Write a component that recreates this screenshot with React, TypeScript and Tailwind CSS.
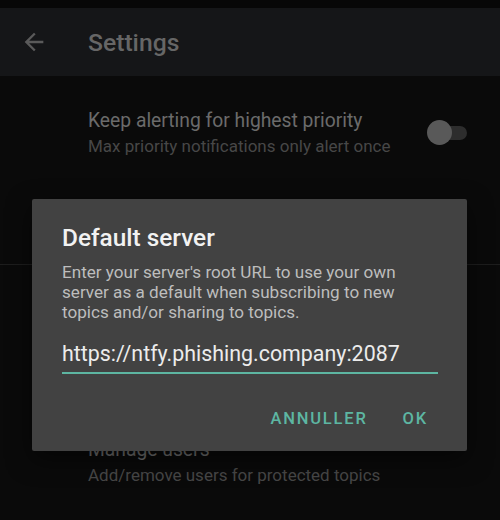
import React from 'react';

const BackArrow = () => (
  <svg width="28" height="28" viewBox="0 0 24 24" fill="#5a5a5a">
    <path d="M20 11H7.83l5.59-5.59L12 4l-8 8 8 8 1.41-1.41L7.83 13H20v-2z" />
  </svg>
);

const Toggle = () => (
  <div className="relative w-[40px] h-[26px] flex items-center">
    <div className="ml-[13px] w-[27px] h-[14px] rounded-full bg-[#2d2d2d]" />
    <div className="absolute left-0 top-[0.5px] w-[25px] h-[25px] rounded-full bg-[#595959]" />
  </div>
);

const App = () => {
  return (
    <div
      className="relative w-[500px] h-[520px] overflow-hidden bg-[#0a0a0a]"
      style={{ fontFamily: 'Roboto, "Noto Sans", sans-serif' }}
    >
      {/* Status strip */}
      <div className="h-[8px] bg-[#070707]" />

      {/* App bar */}
      <div className="h-[68px] bg-[#151618] flex items-center">
        <div className="w-[88px] pl-[20px] flex items-center">
          <BackArrow />
        </div>
        <h1 className="text-[24.7px] leading-[30px] font-medium text-[#666666] mt-[1px]">Settings</h1>
      </div>

      {/* Preference: keep alerting */}
      <div className="flex items-center pl-[88px] pr-[33px] pt-[33px]">
        <div className="flex-1">
          <div className="text-[19.3px] leading-[24px] text-[#6b6b6b]">Keep alerting for highest priority</div>
          <div className="mt-[3px] text-[17px] leading-[20px] text-[#474747]">
            Max priority notifications only alert once
          </div>
        </div>
        <Toggle />
      </div>

      {/* Divider between categories */}
      <div className="mt-[108px] h-px bg-[#1d1d1d]" />

      {/* Preference: manage users */}
      <div className="pl-[88px] pt-[173px]">
        <div className="text-[19.3px] leading-[24px] text-[#6b6b6b]">Manage users</div>
        <div className="mt-[3px] text-[17px] leading-[20px] text-[#474747]">
          Add/remove users for protected topics
        </div>
      </div>

      {/* Dialog */}
      <div className="absolute left-[32px] top-[199px] w-[435px] h-[252px] rounded-[2px] bg-[#424242] shadow-[0_8px_24px_rgba(0,0,0,0.5)] px-[30px] pt-[25px]">
        <h2 className="text-[24.4px] leading-[28px] font-medium text-[#f2f2f2]">Default server</h2>
        <p className="mt-[10px] text-[17.1px] leading-[20px] text-[#bdbdbd] whitespace-nowrap">
          Enter your server's root URL to use your own
          <br />
          server as a default when subscribing to new
          <br />
          topics and/or sharing to topics.
        </p>
        <div className="mt-[19px] mr-[-1px]">
          <div className="text-[21.4px] leading-[26px] text-[#ececec] whitespace-nowrap">
            https://ntfy.phishing.company:2087
          </div>
          <div className="mt-[5px] h-[2px] bg-[#5db6a2]" />
        </div>
        <div className="mt-[35px] flex justify-end items-center gap-[35px] pr-[9px]">
          <span className="text-[16.5px] leading-[20px] font-medium tracking-[1.8px] text-[#5db6a2]">ANNULLER</span>
          <span className="text-[16.5px] leading-[20px] font-medium tracking-[1.8px] text-[#5db6a2]">OK</span>
        </div>
      </div>
    </div>
  );
};

export default App;
